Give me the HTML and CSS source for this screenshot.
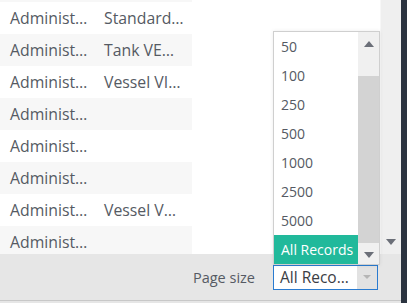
FILE: index.html
```html
<!DOCTYPE html>
<html lang="en">
<head>
  <meta charset="UTF-8">
  <meta name="viewport" content="width=device-width, initial-scale=1.0">
  <title>Grid page size</title>
  <link rel="stylesheet" href="styles.css">
</head>
<body>
  <div class="frame">
    <div class="panel">
      <div class="grid">
        <div class="grid-body">
          <div class="rows">
            <div class="row row-partial"></div>
            <div class="row"><span class="cell">Administ…</span><span class="cell">Standard…</span></div>
            <div class="row"><span class="cell">Administ…</span><span class="cell">Tank VE…</span></div>
            <div class="row"><span class="cell">Administ…</span><span class="cell">Vessel VI…</span></div>
            <div class="row"><span class="cell">Administ…</span><span class="cell"></span></div>
            <div class="row"><span class="cell">Administ…</span><span class="cell"></span></div>
            <div class="row"><span class="cell">Administ…</span><span class="cell"></span></div>
            <div class="row"><span class="cell">Administ…</span><span class="cell">Vessel V…</span></div>
            <div class="row"><span class="cell">Administ…</span><span class="cell"></span></div>
          </div>
        </div>
        <div class="vscroll">
          <span class="tri-down"></span>
        </div>
      </div>

      <div class="footer">
        <span class="pager-label">Page size</span>
        <div class="select">
          <span class="select-value">All Reco…</span>
          <span class="select-btn"><span class="caret"></span></span>

          <div class="dropdown">
            <ul class="options">
              <li>50</li>
              <li>100</li>
              <li>250</li>
              <li>500</li>
              <li>1000</li>
              <li>2500</li>
              <li>5000</li>
              <li class="selected">All Records</li>
            </ul>
            <div class="list-scroll">
              <span class="btn-up"><span class="tri-up"></span></span>
              <span class="thumb"></span>
              <span class="btn-down"><span class="tri-down"></span></span>
            </div>
          </div>
        </div>
      </div>
    </div>
    <div class="edge"></div>
  </div>
</body>
</html>
```

FILE: styles.css
```css
body {
  margin: 0;
  font-family: "Open Sans", "Noto Sans", sans-serif;
  color: #555a63;
}
.frame {
  display: flex;
  height: 303px;
}
.panel {
  flex: 1;
  display: flex;
  flex-direction: column;
  background-color: #e6e6e6;
}
.edge {
  width: 6px;
  background-color: #2b3340;
}

/* grid */
.grid {
  display: flex;
  height: 254px;
  background-color: #fff;
}
.grid-body {
  flex: 1;
  overflow: hidden;
}
.rows {
  width: 192px;
}
.row {
  display: flex;
  height: 32px;
  align-items: center;
  font-size: 15.8px;
}
.row:nth-child(odd) {
  background-color: #f7f7f7;
}
.row-partial {
  height: 2px;
}
.cell {
  width: 94px;
  padding-left: 10px;
  box-sizing: border-box;
  white-space: nowrap;
}
.vscroll {
  width: 21px;
  background-color: #efefef;
  border-left: 1px solid #f7f7f7;
  display: flex;
  flex-direction: column;
  justify-content: flex-end;
  align-items: center;
  padding-bottom: 9px;
  box-sizing: border-box;
}
.tri-down {
  width: 0;
  height: 0;
  border-left: 5px solid transparent;
  border-right: 5px solid transparent;
  border-top: 6px solid #6b6f78;
}
.tri-up {
  width: 0;
  height: 0;
  border-left: 5px solid transparent;
  border-right: 5px solid transparent;
  border-bottom: 6px solid #6b6f78;
}

/* footer pager */
.footer {
  height: 46px;
  display: flex;
  align-items: center;
  justify-content: flex-end;
  gap: 18px;
  padding-right: 23px;
  border-bottom: 1px solid #c8c8c8;
}
.pager-label {
  font-size: 14.5px;
}
.select {
  position: relative;
  display: flex;
  width: 105px;
  height: 25px;
  box-sizing: border-box;
  border: 1px solid #2a7bd0;
  background-color: #fff;
}
.select-value {
  flex: 1;
  padding-left: 6px;
  font-size: 15.5px;
  line-height: 23px;
  color: #3a3d44;
  white-space: nowrap;
  overflow: hidden;
}
.select-btn {
  width: 20px;
  background-color: #e2e2e2;
  display: flex;
  align-items: center;
  justify-content: center;
}
.caret {
  width: 0;
  height: 0;
  border-left: 4px solid transparent;
  border-right: 4px solid transparent;
  border-top: 4px solid #b5b5b5;
}

/* open list */
.dropdown {
  position: absolute;
  left: -1px;
  bottom: 24px;
  width: 105px;
  display: flex;
  border: 1px solid #cfcfcf;
  background-color: #fff;
  box-shadow: 0 0 4px rgba(0, 0, 0, 0.08);
}
.options {
  flex: 1;
  min-width: 0;
  margin: 0;
  padding: 0;
  list-style: none;
}
.options li {
  height: 29px;
  line-height: 29px;
  padding-left: 7px;
  font-size: 14px;
  white-space: nowrap;
  overflow: hidden;
}
.options li.selected {
  background-color: #21b99b;
  color: #fff;
}
.list-scroll {
  width: 21px;
  display: flex;
  flex-direction: column;
  background-color: #f0f0f0;
}
.btn-up {
  height: 44px;
  display: flex;
  justify-content: center;
  padding-top: 9px;
  box-sizing: border-box;
}
.thumb {
  flex: 1;
  background-color: #d3d3d3;
}
.btn-down {
  height: 21px;
  display: flex;
  justify-content: center;
  align-items: center;
  padding-top: 4px;
  box-sizing: border-box;
}
```
